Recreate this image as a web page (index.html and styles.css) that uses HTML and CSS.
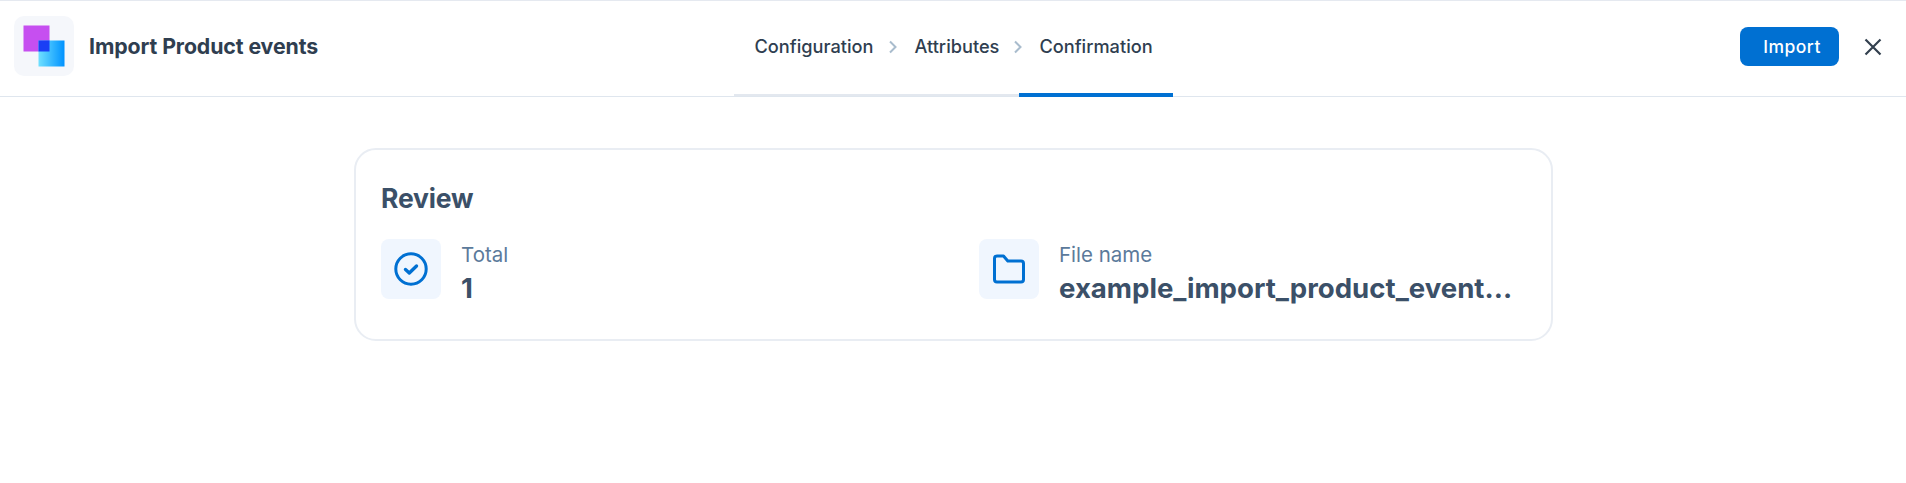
FILE: index.html
```html
<!DOCTYPE html>
<html lang="en">
  <head>
    <meta charset="UTF-8" />
    <title>Import Product events</title>
    <link rel="stylesheet" href="styles.css">
  </head>
  <body>
    <header class="topbar">
      <div class="topbar-title">
        <div class="logo-box">
          <svg width="60" height="60" viewBox="0 0 60 60">
            <defs>
              <linearGradient id="blueFade" x1="0" y1="0" x2="1" y2="0">
                <stop offset="0" stop-color="#6fe0ff" />
                <stop offset="1" stop-color="#0092ff" />
              </linearGradient>
            </defs>
            <rect x="9.500" y="9.500" width="26" height="26" fill="#c64ff0" />
            <rect x="24.500" y="24.500" width="26" height="26" fill="url(#blueFade)" />
            <rect x="24.500" y="24.500" width="11" height="11" fill="#1a3ff5" />
          </svg>
        </div>
        <h1>Import Product events</h1>
      </div>

      <nav class="steps">
        <a class="step step-first" href="#">Configuration</a>
        <svg class="chevron chevron-first" width="10" height="14" viewBox="0 0 10 14"><path d="M3 1.500L8.500 7 3 12.500" /></svg>
        <a class="step" href="#">Attributes</a>
        <svg class="chevron chevron-last" width="10" height="14" viewBox="0 0 10 14"><path d="M3 1.500L8.500 7 3 12.500" /></svg>
        <a class="step step-active" href="#">Confirmation</a>
      </nav>

      <div class="topbar-actions">
        <button class="import-btn" type="button">Import</button>
        <svg class="close-icon" width="18" height="18" viewBox="0 0 18 18"><path d="M1.500 1.500l15 15M16.500 1.500l-15 15" /></svg>
      </div>
    </header>

    <main class="review-card">
      <h2>Review</h2>
      <div class="review-row">
        <div class="review-item">
          <div class="icon-box">
            <svg width="34" height="34" viewBox="0 0 34 34">
              <circle cx="17" cy="17" r="15.200" />
              <path class="check" d="M11.500 17.500l3.800 3.400 7.200-6.900" />
            </svg>
          </div>
          <div class="item-text">
            <span class="item-label">Total</span>
            <strong class="item-value">1</strong>
          </div>
        </div>
        <div class="review-item">
          <div class="icon-box">
            <svg width="34" height="34" viewBox="0 0 34 34">
              <path d="M2.500 6.500A2.500 2.500 0 0 1 5 4h6.500l4.300 5H29a2.500 2.500 0 0 1 2.500 2.500V27.500A2.500 2.500 0 0 1 29 30H5a2.500 2.500 0 0 1-2.500-2.500z" />
            </svg>
          </div>
          <div class="item-text">
            <span class="item-label">File name</span>
            <strong class="item-value item-file">example_import_product_event...</strong>
          </div>
        </div>
      </div>
    </main>
  </body>
</html>
```

FILE: styles.css
```css
body {
  margin: 0;
  font-family: "Inter", "Open Sans", sans-serif;
  background-color: #fff;
  color: #33475b;
}

.topbar {
  display: grid;
  grid-template-columns: 1fr auto 1fr;
  height: 95px;
  border-top: 1px solid #e5e9f0;
  border-bottom: 1px solid #dfe6ee;
}

.topbar-title {
  display: flex;
  align-items: center;
  gap: 15px;
  padding-left: 14px;
  margin-top: -6px;
}

.logo-box {
  width: 60px;
  height: 60px;
  border-radius: 10px;
  background-color: #f5f7fb;
}

.topbar-title h1 {
  margin: 0;
  font-size: 21.300px;
  font-weight: 700;
  color: #2f3e50;
  letter-spacing: -0.1px;
}

.steps {
  display: flex;
  align-items: center;
  height: 95px;
  width: 439px;
  box-sizing: border-box;
  border-bottom: 2px solid #e3e8ef;
  margin-bottom: -1px;
}

.step {
  display: flex;
  align-items: center;
  height: 100%;
  box-sizing: border-box;
  padding-bottom: 3px;
  color: #2f3e50;
  font-size: 18.200px;
  font-weight: 500;
  text-decoration: none;
}

.step-first {
  padding-left: 21px;
}

.chevron {
  position: relative;
  top: -1px;
  flex-shrink: 0;
}

.chevron path {
  fill: none;
  stroke: #a9bccd;
  stroke-width: 2;
}

.chevron-first {
  margin: 0 18px 0 13px;
}

.chevron-last {
  margin: 0 0 0 13px;
}

.step-active {
  margin-left: -3px;
  padding: 0 20px 1px;
  border-bottom: 4px solid #0070d2;
  height: 97px;
  margin-bottom: -2px;
}

.topbar-actions {
  display: flex;
  justify-content: flex-end;
  align-items: center;
  gap: 25px;
  padding-right: 24px;
  margin-top: -4px;
}

.import-btn {
  width: 99px;
  height: 39px;
  padding: 0 0 0 5px;
  border: none;
  border-radius: 8px;
  background-color: #0070d2;
  color: #fff;
  font-family: "Inter", sans-serif;
  font-size: 17.500px;
  font-weight: 500;
  letter-spacing: 0.5px;
}

.close-icon path {
  fill: none;
  stroke: #33404f;
  stroke-width: 2.200;
}

.review-card {
  box-sizing: border-box;
  width: 1199px;
  height: 193px;
  margin: 51px 0 0 354px;
  padding: 0 25px;
  border: 2px solid #e9edf3;
  border-radius: 22px;
}

.review-card h2 {
  margin: 0;
  padding-top: 33px;
  font-size: 26.500px;
  line-height: 30px;
  font-weight: 700;
  color: #3b5068;
  letter-spacing: -0.2px;
}

.review-row {
  display: grid;
  grid-template-columns: 598px 1fr;
  margin-top: 26px;
}

.review-item {
  display: flex;
  gap: 20px;
}

.icon-box {
  display: flex;
  align-items: center;
  justify-content: center;
  width: 60px;
  height: 60px;
  border-radius: 8px;
  background-color: #f0f6fe;
}

.icon-box svg * {
  fill: none;
  stroke: #0070d2;
  stroke-width: 3;
  stroke-linecap: round;
  stroke-linejoin: round;
}

.icon-box svg .check {
  stroke-width: 3.400;
}

.item-text {
  display: flex;
  flex-direction: column;
}

.item-label {
  padding-top: 2px;
  font-size: 20.500px;
  line-height: 28px;
  color: #5b7a9b;
}

.item-value {
  margin-top: 2px;
  font-size: 27.600px;
  line-height: 34px;
  font-weight: 700;
  color: #3b5068;
}

.item-file {
  white-space: nowrap;
}
```
